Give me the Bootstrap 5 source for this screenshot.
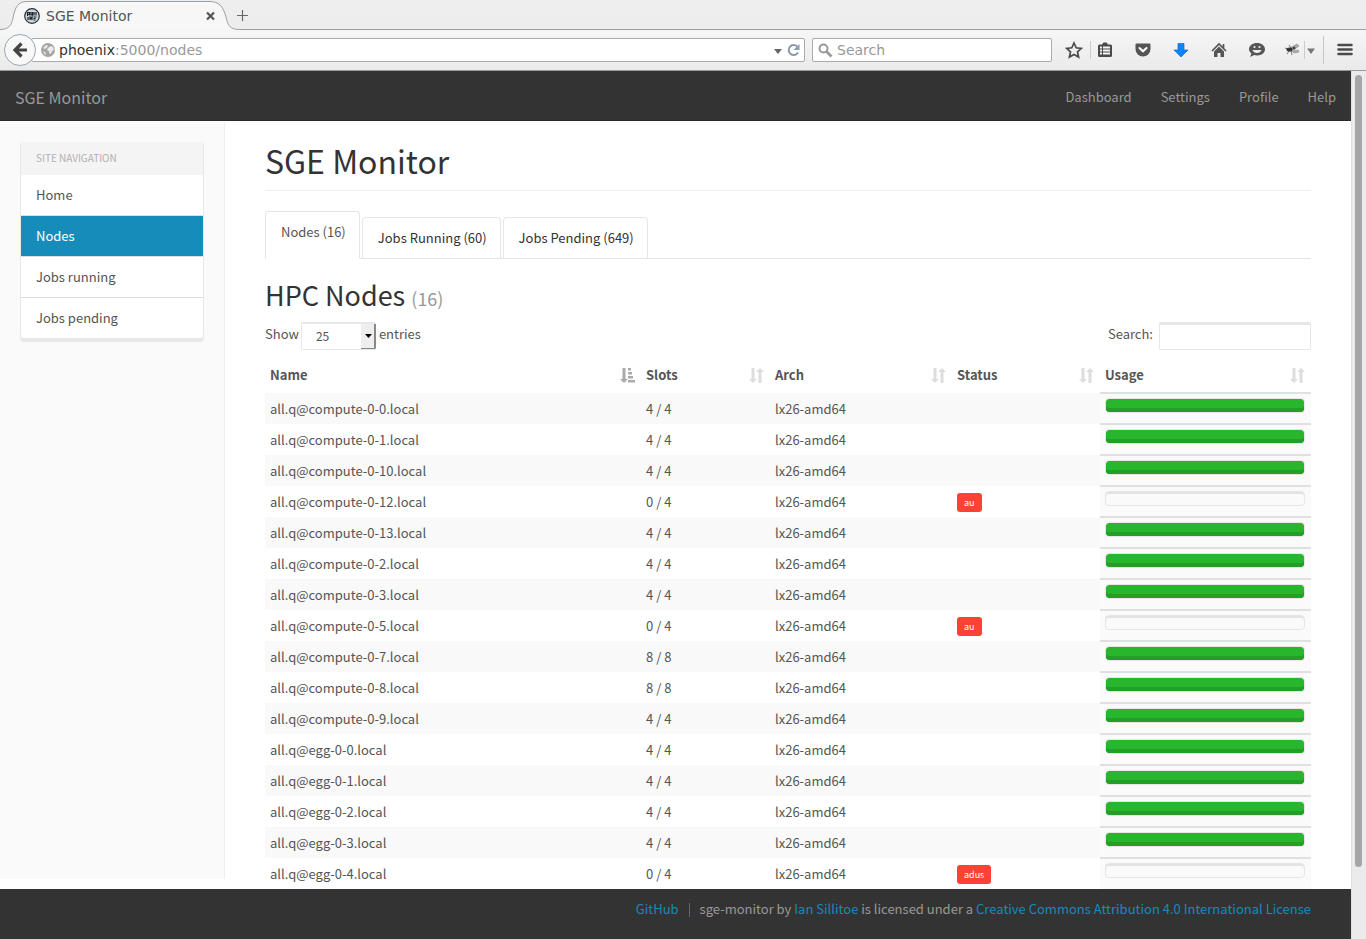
<!DOCTYPE html>
<html lang="en">
<head>
<meta charset="utf-8">
<meta name="viewport" content="width=device-width, initial-scale=1">
<title>SGE Monitor</title>
<link href="https://cdn.jsdelivr.net/npm/bootstrap@5.3.0/dist/css/bootstrap.min.css" rel="stylesheet">
<style>
  body { font-family: "Noto Sans CJK SC", "Source Sans Pro", sans-serif; font-size: 13px; line-height: 20px; color: #555; background: #fff; }
  a { text-decoration: none; color: #158cba; }
  svg { display: block; flex: none; }
  button { background: none; border: 0; padding: 0; color: inherit; }

  /* browser frame */
  .chrome { font-family: "DejaVu Sans", sans-serif; font-size: 14px; color: #555; }
  .tab-strip { height: 30px; background: linear-gradient(#eee, #ededed); border-bottom: 1px solid #9aa1a6; }
  .browser-tab { width: 236px; height: 30px; margin-bottom: -1px; padding: 2px 17px 0 24px; }
  .tab-title { margin-left: 6px; }
  .tab-shape { position: absolute; left: 0; top: 0; }
  .toolbar { height: 41px; background: linear-gradient(#f6f6f6, #eaeaea); border-bottom: 1px solid #999; padding: 0 13px 0 4px; }
  .back-btn { width: 32px; height: 32px; border: 1px solid #9aa7b5; border-radius: 50%; background: #f8f8f8; z-index: 1; margin-right: -5px; padding: 6px; }
  .url-box, .search-box { height: 24px; background: #fff; border: 1px solid #aaa; border-radius: 2px; }
  .url-box { padding: 0 4px 0 9px; }
  .url-box a { color: #999; }
  .url-box .host { color: #333; }
  .search-box { width: 240px; margin-left: 7px; padding: 0 5px; }
  .search-box input { font-size: 14px; line-height: 20px; color: #555; }
  .search-box input::placeholder { color: #999; opacity: 1; }
  .tools { padding-left: 13px; }
  .tools .spaced { margin-left: 22px; }
  .tools .addon { margin-left: 19px; }
  .tools .split { width: 1px; height: 18px; background: #ccc; }
  .tools .after-star { margin: 0 6px 0 7px; }
  .tools .split-tall { width: 1px; height: 28px; background: #c4c8cc; margin: 0 13px 0 6px; }

  /* page */
  .viewport { min-height: 0; }
  .scroll-track { width: 15px; background: #ebebeb; border-left: 1px solid #e0e0e0; padding: 4px 4px 72px 3px; }
  .scroll-thumb { width: 7px; height: 100%; border-radius: 4px; background: #a6a6a6; }
  .site-nav { height: 50px; background: #333; border-bottom: 1px solid #292929; padding: 2px 15px 0; }
  .site-nav .navbar-brand { font-size: 16px; color: #999; margin: 0; padding: 0; line-height: 20px; }
  .site-nav .nav { gap: 29px; }
  .site-nav .nav-link { color: #999; padding: 0; line-height: 20px; }
  .sidebar { width: 225px; background: #fafafa; border-right: 1px solid #eee; margin: 1px 0 10px; padding: 20px 20px 0; flex: none; }
  .side-list { --bs-list-group-border-radius: 4px; border: 1px solid #e7e7e7; border-top: 0; border-bottom: 4px solid #e7e7e7; }
  .side-list .list-group-item { border: 0; border-bottom: 1px solid #ddd; height: 41px; padding: 10px 15px; color: #555; font-size: 13px; line-height: 20px; }
  .side-list .list-group-item:last-child { border: 0; height: 40px; }
  .side-list .list-group-item.active { background: #158cba; color: #fff; margin: 0; }
  .side-title { height: 33px; background: #f4f4f4; color: #b0b0b0; font-size: 10px; line-height: 32px; padding: 0 15px; margin: 0; border-radius: 4px 4px 0 0; }

  .content { padding: 20px 40px 0; }
  h1 { font-size: 32px; line-height: 38px; font-weight: 400; color: #333; padding-bottom: 11px; margin: 0 0 20px; border-bottom: 1px solid #eee; }
  h2 { font-size: 27px; line-height: 34px; font-weight: 400; color: #333; margin: 19px 0 7px; }
  h2 small { font-size: 18px; color: #999; }
  .page-tabs { --bs-nav-tabs-border-color: #e4e4e4; gap: 2px; }
  .page-tabs .nav-link { color: #333; padding: 10px 13px 10px 15px; border: 1px solid #e7e7e7; border-bottom-color: #e4e4e4; border-radius: 4px 4px 0 0; line-height: 20px; }
  .page-tabs .nav-link.active { color: #555; padding-bottom: 16px; border-color: #e4e4e4 #e4e4e4 #fff; }

  .table-tools { line-height: 24px; }
  .len-select, .filter-input { height: 28px; border: 1px solid #e7e7e7; border-top-width: 3px; border-radius: 2px; background-color: #fff; color: #555; font-size: 12px; }
  .len-select { width: 75px; padding: 0 14px 1px; margin: 0 3px 0 2px; border-right-width: 0; border-top-width: 2px; line-height: 20px; appearance: none; background: #fff no-repeat right top/15px 26px url("data:image/svg+xml,%3Csvg xmlns='http://www.w3.org/2000/svg' viewBox='0 0 15 26'%3E%3Cpath fill='%23888' d='M0 0h15v26H0z'/%3E%3Cpath fill='%23eee' d='M0 0h13v24H0z'/%3E%3Cpath d='M4 10h7l-3.500 4z'/%3E%3C/svg%3E"); }
  .filter-input { width: 152px; padding: 0 10px; margin-left: 6px; }

  .node-table { table-layout: fixed; font-size: 13px; margin-top: 11px; }
  .node-table th, .node-table td { padding: 5px; height: 31px; line-height: 20px; text-align: left; }
  .node-table th { height: 32px; padding-top: 4px; font-weight: 700; color: #555; vertical-align: top; }
  .col-slots { width: 129px; } .col-arch { width: 182px; } .col-status { width: 148px; } .col-usage { width: 211px; }
  .node-table tbody tr:nth-child(odd) { background: #f9f9f9; }
  .sort { color: #ddd; margin-right: 1px; }
  .sort.on { color: #aaa; }
  .node-table td.usage { border-top: 2px solid #e0e0e0; padding: 4px 6px 0 5px; background: #fafafa; vertical-align: top; }
  .meter { height: 15px; border: 1px solid #e6e6e6; border-radius: 4px; background: #fafafa; box-shadow: inset 0 2px 0 #e2e2e2; }
  .meter .progress-bar { background: #28b62c; border-radius: 3px; box-shadow: inset 0 -4px 0 #239f28; }
  .state { display: inline-block; vertical-align: top; margin-top: 2px; height: 19px; padding: 0 7px; border-radius: 3px; background: #ff4136; color: #fff; font-size: 9px; line-height: 19px; }
  .site-footer { height: 50px; background: #333; color: #999; padding: 10px 40px; }
  .site-footer .bar { width: 1px; height: 14px; background: #666; margin: 4px 10px 0; }
</style>
</head>
<body>
<div class="vh-100 d-flex flex-column overflow-hidden">
  <header class="chrome">
    <div class="tab-strip d-flex">
      <div class="browser-tab position-relative d-flex align-items-center">
        <svg class="tab-shape" width="240" height="30" viewBox="0 0 240 30"><path d="M0 29.500C9 29.500 11.500 25 13 18 15 7 18 1.500 27 1.500H209C219 1.500 223 6 226 17 228 26 230 29.500 240 29.500V30H0z" fill="#f7f7f7"/><path d="M0 29.500C9 29.500 11.500 25 13 18 15 7 18 1.500 27 1.500H209C219 1.500 223 6 226 17 228 26 230 29.500 240 29.500" fill="none" stroke="#9aa1a6"/></svg>
        <svg class="position-relative" width="16" height="16" viewBox="0 0 16 16"><circle cx="8" cy="8" r="7.300" fill="#c9d6e2" stroke="#26303a" stroke-width="1.200"/><path d="M3.500 8V4.500H5.500V6.500H3.500M7 4v3h1.500V4M10 4v3.500M12 4v3.500M4 9v3M6 12V9l1 1.500L8 9v3M9.500 9h3M9.500 10.500h2M9.500 12h2" fill="none" stroke="#222" stroke-width="1.200"/></svg>
        <span class="tab-title position-relative flex-fill">SGE Monitor</span>
        <button class="position-relative" aria-label="Close tab"><svg width="14" height="12" viewBox="0 0 14 12"><path d="M2 2.500l7 7M9 2.500l-7 7" stroke="#555" stroke-width="2.200"/></svg></button>
      </div>
      <button class="align-self-center" aria-label="New tab"><svg width="13" height="13" viewBox="0 0 13 13"><path d="M1 7.500h11M6.500 2v11" stroke="#666" stroke-width="1.200"/></svg></button>
    </div>
    <div class="toolbar d-flex align-items-center">
      <button class="back-btn" aria-label="Back"><svg width="18" height="18" viewBox="0 0 18 18"><path d="M10.500 2.500L4 9l6.500 6.500M4 9h12" fill="none" stroke="#444" stroke-width="3.200"/></svg></button>
      <div class="url-box d-flex align-items-center flex-fill">
        <svg width="14" height="14" viewBox="0 0 14 14"><circle cx="7" cy="7" r="7" fill="#a5a5a5"/><path d="M2 5l3-3 2 .5-1 2-2 1.500zM7 5l3-2 2 1 1 3-2 1-1 3-2-1V8L6 7zM2 8l2 1 1 2-1 1z" fill="#ececec"/></svg>
        <a class="flex-fill ms-1" href="#"><span class="host">phoenix</span>:5000/nodes</a>
        <svg width="30" height="16" viewBox="0 0 30 16"><path d="M4 7h8l-4 5z" fill="#666"/><path d="M27.200 4.500A5 5 0 1 0 28 10.500" fill="none" stroke="#8c9cab" stroke-width="2"/><path d="M29.500 2v6h-6z" fill="#8c9cab"/></svg>
      </div>
      <div class="search-box d-flex align-items-center">
        <svg width="15" height="15" viewBox="0 0 15 15"><circle cx="5.500" cy="5.500" r="4" fill="none" stroke="#999" stroke-width="2"/><path d="M8.500 8.500l5 5" stroke="#999" stroke-width="2.600"/></svg>
        <input class="border-0 bg-transparent p-0 ms-1 w-100" type="text" placeholder="Search" aria-label="Search the web">
      </div>
      <div class="tools d-flex align-items-center">
        <button aria-label="Bookmark"><svg width="18" height="18" viewBox="0 0 18 18"><path d="M9 2l2.200 4.800 5.200.6-3.900 3.500 1.100 5.200L9 13.500l-4.600 2.600 1.100-5.200L1.600 7.400l5.200-.6z" fill="none" stroke="#4a4a4a" stroke-width="1.700"/></svg></button>
        <span class="split after-star"></span>
        <button aria-label="Bookmarks list"><svg width="16" height="16" viewBox="0 0 16 16"><path d="M2.500 2.500H5L6.500.5h3L11 2.500h2.500q1.500 0 1.500 1.500v9.500q0 1.500-1.500 1.500h-11Q1 15 1 13.500V4q0-1.500 1.500-1.500z" fill="#4a4a4a"/><path d="M3 5.500h2M6 5.500h7M3 8.500h2M6 8.500h7M3 11.500h2M6 11.500h7" stroke="#f4f4f4" stroke-width="1.800"/></svg></button>
        <button class="spaced" aria-label="Pocket"><svg width="16" height="16" viewBox="0 0 16 16"><path d="M1.500 1.500h13q1 0 1 1V7a7.500 7.500 0 0 1-15 0V2.500q0-1 1-1z" fill="#555"/><path d="M4.500 6L8 9.300 11.500 6" fill="none" stroke="#fff" stroke-width="2" stroke-linecap="round"/></svg></button>
        <button class="spaced" aria-label="Downloads"><svg width="16" height="16" viewBox="0 0 16 16"><path d="M5 1.500h6V8h4l-7 7-7-7h4z" fill="#0a84ff" stroke="#1768c0" stroke-width=".7"/></svg></button>
        <button class="spaced" aria-label="Home"><svg width="16" height="16" viewBox="0 0 16 16"><path d="M1 9l7-7 7 7M12.500 2v4" fill="none" stroke="#555" stroke-width="1.700"/><path d="M3 9.500l5-5 5 5V15H9.500v-4h-3v4H3z" fill="#555"/></svg></button>
        <button class="spaced" aria-label="Chat"><svg width="16" height="16" viewBox="0 0 16 16"><path d="M8 1c4.500 0 8 2.700 8 6.300s-3.500 6.200-8 6.200c-1 0-2-.1-2.800-.4L1 15l1.500-3.500C1 10.500 0 9 0 7.300 0 3.700 3.500 1 8 1z" fill="#555"/><path d="M3.500 8h9c-.5 2-2.300 3-4.500 3S4 10 3.500 8z" fill="#eee"/><circle cx="5.500" cy="5" r="1.100" fill="#eee"/><circle cx="10.500" cy="5" r="1.100" fill="#eee"/></svg></button>
        <button class="addon" aria-label="Add-on"><svg width="16" height="16" viewBox="0 0 16 16"><path d="M6 6l7-4 2 2-6 4zM8 9l6-1 1 2-5 1z" fill="#aaa" stroke="#888" stroke-width=".6"/><path d="M1 6l3 1M3 12l2-3M8 13l-1-4M5 3l2 3" stroke="#777"/><ellipse cx="5.500" cy="7.500" rx="3" ry="2" fill="#333"/><circle cx="10" cy="6" r="1.500" fill="#444"/></svg></button>
        <span class="split ms-1"></span>
        <svg width="12" height="10" viewBox="0 0 12 10"><path d="M2 3.500h8L6 9z" fill="#777"/></svg>
        <span class="split-tall"></span>
        <button aria-label="Menu"><svg width="16" height="16" viewBox="0 0 16 16"><path d="M1.500 3h13M1.500 7.500h13M1.500 12h13" stroke="#4a4a4a" stroke-width="2.600" stroke-linecap="round"/></svg></button>
      </div>
    </div>
  </header>

  <div class="viewport d-flex flex-fill">
    <div class="flex-fill d-flex flex-column">
      <nav class="site-nav d-flex align-items-center justify-content-between">
        <a class="navbar-brand" href="#">SGE Monitor</a>
        <div class="nav">
          <a class="nav-link" href="#">Dashboard</a><a class="nav-link" href="#">Settings</a><a class="nav-link" href="#">Profile</a><a class="nav-link" href="#">Help</a>
        </div>
      </nav>
      <div class="d-flex flex-fill overflow-hidden">
        <aside class="sidebar">
          <div class="side-list list-group">
            <p class="side-title">SITE NAVIGATION</p>
            <a class="list-group-item" href="#">Home</a>
            <a class="list-group-item active" href="#">Nodes</a>
            <a class="list-group-item" href="#">Jobs running</a>
            <a class="list-group-item" href="#">Jobs pending</a>
          </div>
        </aside>
        <main class="content flex-fill">
          <h1>SGE Monitor</h1>
          <ul class="nav nav-tabs page-tabs align-items-end">
            <li class="nav-item"><a class="nav-link active" href="#">Nodes (16)</a></li>
            <li class="nav-item"><a class="nav-link" href="#">Jobs Running (60)</a></li>
            <li class="nav-item"><a class="nav-link" href="#">Jobs Pending (649)</a></li>
          </ul>
          <h2>HPC Nodes <small>(16)</small></h2>
          <div class="table-tools d-flex justify-content-between">
            <label class="d-flex">Show<select class="len-select"><option>25</option></select>entries</label>
            <label class="d-flex">Search:<input class="filter-input" type="search"></label>
          </div>
          <table class="node-table w-100">
            <colgroup><col><col class="col-slots"><col class="col-arch"><col class="col-status"><col class="col-usage"></colgroup>
            <thead><tr id="heads"></tr></thead>
            <tbody id="nodes"></tbody>
          </table>
        </main>
      </div>
      <footer class="site-footer d-flex justify-content-end">
        <a href="#">GitHub</a><span class="bar"></span>
        <span>sge-monitor by <a href="#">Ian Sillitoe</a> is licensed under a <a href="#">Creative Commons Attribution 4.0 International License</a></span>
      </footer>
    </div>
    <div class="scroll-track"><div class="scroll-thumb"></div></div>
  </div>
</div>
<script src="https://cdn.jsdelivr.net/npm/bootstrap@5.3.0/dist/js/bootstrap.bundle.min.js"></script>
<script>
  const down = '<path d="M2.500 0h3v11h2.500L4 15 0 11h2.500z"/>';
  const both = down + '<path d="M9.500 15h3V4H15L11 0 7 4h2.500z"/>';
  const asc = down + '<path d="M8 0h3v2.500H8zM8 4h4v2.500H8zM8 8h5v2.500H8zM8 12h7v2.500H8z"/>';
  document.getElementById('heads').innerHTML = ['Name', 'Slots', 'Arch', 'Status', 'Usage'].map((t, i) =>
    `<th><div class="d-flex justify-content-between align-items-center">${t}<svg class="sort ${i ? '' : 'on'}" width="15" height="15" viewBox="0 0 15 15" fill="currentColor">${i ? both : asc}</svg></div></th>`).join('');
  const nodes = [
    ['compute-0-0', 4, 4], ['compute-0-1', 4, 4], ['compute-0-10', 4, 4], ['compute-0-12', 0, 4, 'au'],
    ['compute-0-13', 4, 4], ['compute-0-2', 4, 4], ['compute-0-3', 4, 4], ['compute-0-5', 0, 4, 'au'],
    ['compute-0-7', 8, 8], ['compute-0-8', 8, 8], ['compute-0-9', 4, 4], ['egg-0-0', 4, 4],
    ['egg-0-1', 4, 4], ['egg-0-2', 4, 4], ['egg-0-3', 4, 4], ['egg-0-4', 0, 4, 'adus']
  ];
  document.getElementById('nodes').innerHTML = nodes.map(([n, used, all, state]) =>
    `<tr><td>all.q@${n}.local</td><td>${used} / ${all}</td><td>lx26-amd64</td><td>${state ? `<span class="state">${state}</span>` : ''}</td>` +
    `<td class="usage"><div class="progress meter"><div class="progress-bar" style="width:${100 * used / all}%"></div></div></td></tr>`).join('');
</script>
</body>
</html>
